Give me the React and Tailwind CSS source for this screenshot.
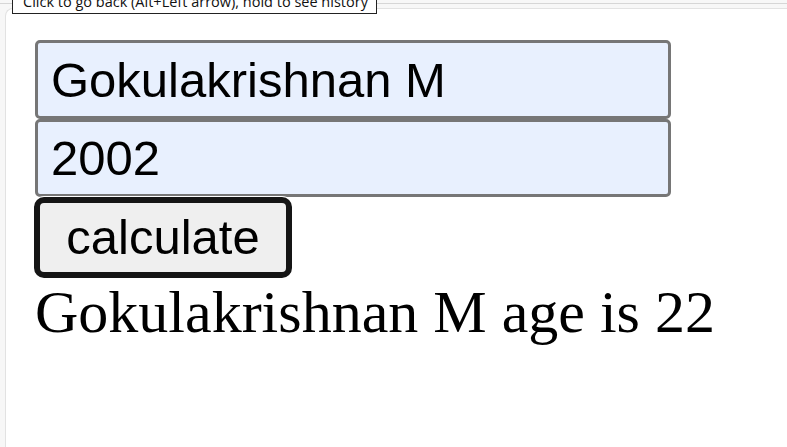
import { useState } from "react";

export default function App() {
  const [name, setName] = useState("Gokulakrishnan M");
  const [year, setYear] = useState("2002");

  return (
    <div className="relative h-[447px] w-[787px] overflow-hidden bg-[#f7f7f7] pl-[5px] pt-[8px]">
      {/* browser tooltip over the page */}
      <div className="absolute left-[12px] top-[-6px] z-10 h-[20px] w-[365px] overflow-hidden border border-[#222] bg-white">
        <span className="absolute left-[10px] top-[-3px] whitespace-nowrap font-['Open_Sans',sans-serif] text-[14.5px] leading-[20px] text-[#111]">
          Click to go back (Alt+Left arrow), hold to see history
        </span>
      </div>
      <div className="absolute left-0 right-0 top-[3px] h-px bg-[#d6d6d6]" />

      <div className="h-full rounded-tl-lg border-l border-t border-[#e2e2e2] bg-white pl-[29px] pt-[31px]">
        <div className="flex w-[636px] flex-col">
          <input
            value={name}
            onChange={(e) => setName(e.target.value)}
            className="h-[79px] rounded-[5px] border-[3px] border-[#767676] bg-[#e8f0fe] px-[13px] font-['Liberation_Sans',Arial,sans-serif] text-[49px] text-black outline-none"
          />
          <input
            value={year}
            onChange={(e) => setYear(e.target.value)}
            className="h-[78px] rounded-[5px] border-[3px] border-[#767676] bg-[#e8f0fe] px-[13px] font-['Liberation_Sans',Arial,sans-serif] text-[49px] text-black outline-none"
          />
        </div>
        <button className="ml-[-1px] h-[81px] w-[258px] rounded-[10px] border-[6px] border-[#151515] bg-[#efefef] font-['Liberation_Sans',Arial,sans-serif] text-[49px] leading-none text-black ring-1 ring-white">
          calculate
        </button>
        <p className="font-['Liberation_Serif','Times_New_Roman',serif] text-[60px] leading-[69px] text-black">
          {name} age is {2024 - Number(year)}
        </p>
      </div>
    </div>
  );
}
